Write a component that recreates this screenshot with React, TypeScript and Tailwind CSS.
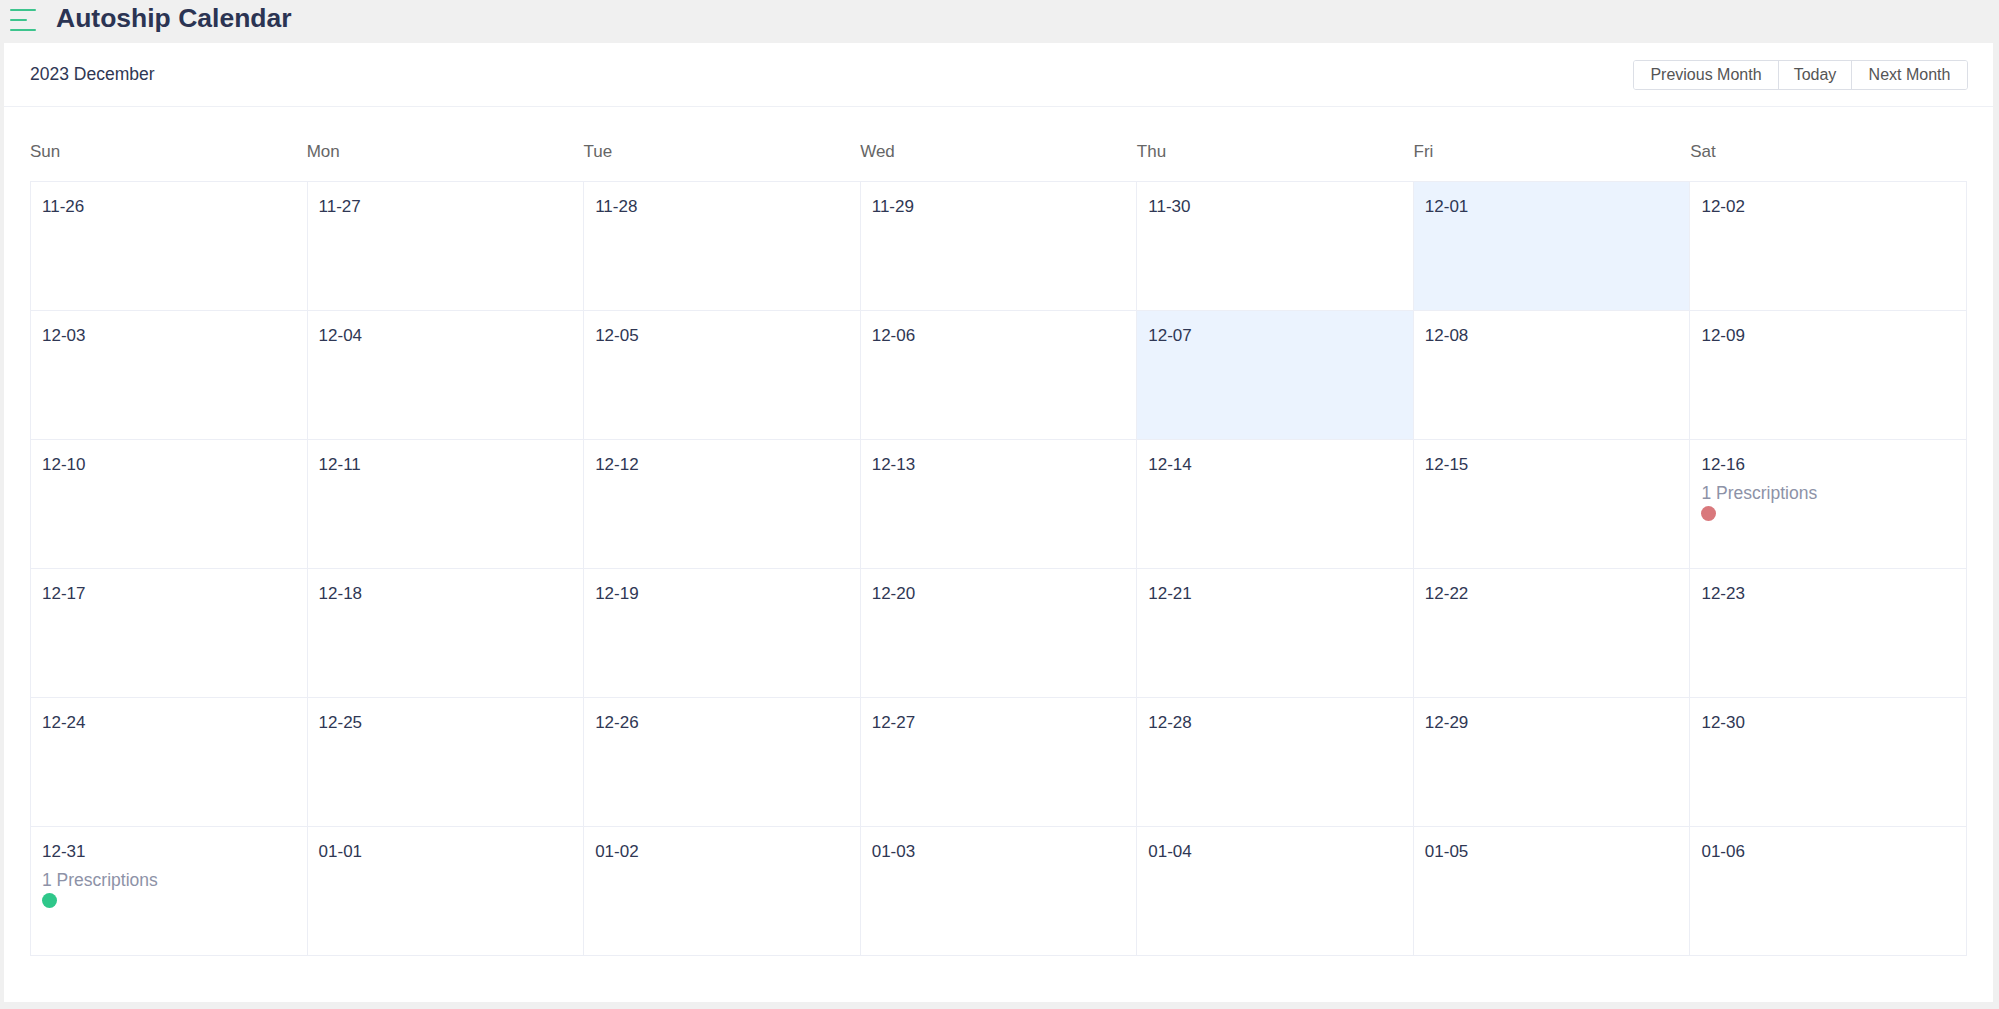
import React from "react";

const weekDays = ["Sun", "Mon", "Tue", "Wed", "Thu", "Fri", "Sat"];

type Day = {
  label: string;
  highlight?: boolean;
  count?: number;
  dot?: string;
};

const weeks: Day[][] = [
  [
    { label: "11-26" },
    { label: "11-27" },
    { label: "11-28" },
    { label: "11-29" },
    { label: "11-30" },
    { label: "12-01", highlight: true },
    { label: "12-02" },
  ],
  [
    { label: "12-03" },
    { label: "12-04" },
    { label: "12-05" },
    { label: "12-06" },
    { label: "12-07", highlight: true },
    { label: "12-08" },
    { label: "12-09" },
  ],
  [
    { label: "12-10" },
    { label: "12-11" },
    { label: "12-12" },
    { label: "12-13" },
    { label: "12-14" },
    { label: "12-15" },
    { label: "12-16", count: 1, dot: "bg-[#d9787c]" },
  ],
  [
    { label: "12-17" },
    { label: "12-18" },
    { label: "12-19" },
    { label: "12-20" },
    { label: "12-21" },
    { label: "12-22" },
    { label: "12-23" },
  ],
  [
    { label: "12-24" },
    { label: "12-25" },
    { label: "12-26" },
    { label: "12-27" },
    { label: "12-28" },
    { label: "12-29" },
    { label: "12-30" },
  ],
  [
    { label: "12-31", count: 1, dot: "bg-[#2fc78a]" },
    { label: "01-01" },
    { label: "01-02" },
    { label: "01-03" },
    { label: "01-04" },
    { label: "01-05" },
    { label: "01-06" },
  ],
];

function MenuIcon() {
  return (
    <svg width="26" height="24" viewBox="0 0 26 24" className="shrink-0">
      <line x1="1" y1="3" x2="25" y2="3" stroke="#3dc48d" strokeWidth="2" strokeLinecap="round" />
      <line x1="1" y1="13" x2="16" y2="13" stroke="#3dc48d" strokeWidth="2" strokeLinecap="round" />
      <line x1="1" y1="23" x2="25" y2="23" stroke="#3dc48d" strokeWidth="2" strokeLinecap="round" />
    </svg>
  );
}

function DayCell({ day }: { day: Day }) {
  return (
    <div
      className={`h-[129px] border-r border-b border-[#eceef5] pl-[11px] pt-[13px] ${
        day.highlight ? "bg-[#ebf3fe]" : "bg-white"
      }`}
    >
      <div className="text-[17px] leading-[24px] text-[#2f3754]">{day.label}</div>
      {day.count ? (
        <>
          <div className="mt-[4px] text-[17.5px] leading-[24px] text-[#8d92a7]">
            {day.count} Prescriptions
          </div>
          <div className={`mt-[1px] h-[15px] w-[15px] rounded-full ${day.dot}`} />
        </>
      ) : null}
    </div>
  );
}

export default function App() {
  return (
    <div
      className="h-[1009px] overflow-hidden bg-[#f0f0f0]"
      style={{ fontFamily: '"Liberation Sans", Arial, sans-serif' }}
    >
      <header className="flex h-[43px] items-center gap-[20px] pl-[10px]">
        <div className="-mt-[6px]">
          <MenuIcon />
        </div>
        <h1 className="-mt-[7px] text-[26.5px] font-bold leading-[30px] text-[#2b3453]">
          Autoship Calendar
        </h1>
      </header>

      <main className="ml-[4px] mr-[6px] bg-white">
        <div className="flex h-[64px] items-center justify-between border-b border-[#eef0f5] pl-[26px] pr-[25px]">
          <div className="text-[17.5px] text-[#2f3754]">2023 December</div>
          <div className="flex h-[30px] overflow-hidden rounded-[3px] border border-[#dcdfe6] text-[16px] text-[#555]">
            <button className="w-[145px] border-r border-[#dcdfe6] bg-white">Previous Month</button>
            <button className="w-[73px] border-r border-[#dcdfe6] bg-white">Today</button>
            <button className="w-[115px] bg-white">Next Month</button>
          </div>
        </div>

        <div className="px-[26px] pb-[46px] pt-[33px]">
          <div className="mb-[17px] grid grid-cols-7">
            {weekDays.map((d) => (
              <div key={d} className="text-[17px] leading-[24px] text-[#666]">
                {d}
              </div>
            ))}
          </div>
          <div className="grid grid-cols-7 border-l border-t border-[#eceef5]">
            {weeks.flat().map((day) => (
              <DayCell key={day.label} day={day} />
            ))}
          </div>
        </div>
      </main>
    </div>
  );
}
